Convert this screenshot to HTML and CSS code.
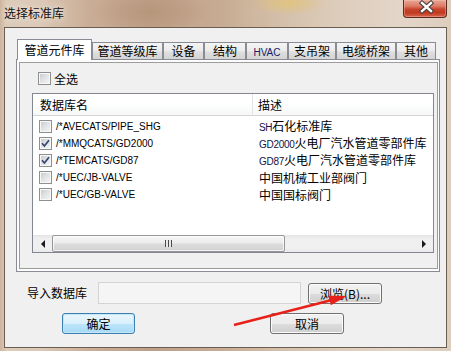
FILE: index.html
```html
<!DOCTYPE html>
<html>
<head>
<meta charset="utf-8">
<link rel="stylesheet" href="styles.css">
</head>
<body>
<div class="window">
  <div class="titlebar">
    <span class="title">选择标准库</span>
    <div class="close">
      <svg width="44" height="17" viewBox="0 0 44 17">
        <path d="M19 3 L28 11 M28 3 L19 11" stroke="#3d3b39" stroke-width="4.4" stroke-linecap="square" fill="none"/>
        <path d="M19 3 L28 11 M28 3 L19 11" stroke="#ffffff" stroke-width="2.4" stroke-linecap="square" fill="none"/>
      </svg>
    </div>
  </div>
  <div class="client">
    <div class="tabctl">
      <div class="tabs">
        <div class="tab active t1">管道元件库</div>
        <div class="tab t2">管道等级库</div>
        <div class="tab t3">设备</div>
        <div class="tab t4">结构</div>
        <div class="tab t5"><span class="en hv">HVAC</span></div>
        <div class="tab t6">支吊架</div>
        <div class="tab t7">电缆桥架</div>
        <div class="tab t8">其他</div>
      </div>
      <div class="panel">
        <div class="page">
          <div class="chk-row"><span class="cb"></span><span class="chk-label">全选</span></div>
          <div class="list">
            <div class="lhead">
              <div class="c1">数据库名</div>
              <div class="c2">描述</div>
            </div>
            <div class="rows">
              <div class="row">
                <div class="c1"><span class="cb"></span><span class="en name">/*AVECATS/PIPE_SHG</span></div>
                <div class="c2"><span class="en sm">SH</span>石化标准库</div>
              </div>
              <div class="row">
                <div class="c1"><span class="cb on"><svg width="11" height="11" viewBox="0 0 11 11"><path d="M2 5.2 L4.4 8 L9 2.2" stroke="#33466e" stroke-width="1.7" fill="none"/></svg></span><span class="en name">/*MMQCATS/GD2000</span></div>
                <div class="c2"><span class="en sm">GD2000</span>火电厂汽水管道零部件库</div>
              </div>
              <div class="row">
                <div class="c1"><span class="cb on"><svg width="11" height="11" viewBox="0 0 11 11"><path d="M2 5.2 L4.4 8 L9 2.2" stroke="#33466e" stroke-width="1.7" fill="none"/></svg></span><span class="en name">/*TEMCATS/GD87</span></div>
                <div class="c2"><span class="en sm">GD87</span>火电厂汽水管道零部件库</div>
              </div>
              <div class="row">
                <div class="c1"><span class="cb"></span><span class="en name">/*UEC/JB-VALVE</span></div>
                <div class="c2">中国机械工业部阀门</div>
              </div>
              <div class="row">
                <div class="c1"><span class="cb"></span><span class="en name">/*UEC/GB-VALVE</span></div>
                <div class="c2">中国国标阀门</div>
              </div>
            </div>
            <div class="hscroll">
              <div class="sb-btn"><span class="tri-l"></span></div>
              <div class="thumb"><span class="grip"></span></div>
              <div class="track"></div>
              <div class="sb-btn"><span class="tri-r"></span></div>
            </div>
          </div>
        </div>
      </div>
    </div>
    <div class="import-row">
      <span class="imp-label">导入数据库</span>
      <div class="input"></div>
      <div class="btn browse">浏览(B)...</div>
    </div>
    <div class="btn-row">
      <div class="btn default ok">确定</div>
      <div class="btn cancel">取消</div>
    </div>
  </div>
  <svg class="arrow" width="451" height="351" viewBox="0 0 451 351">
    <line x1="234" y1="325" x2="332" y2="300" stroke="#e8201a" stroke-width="2.4"/>
    <polygon points="347,296 330.8,305.3 328.4,295.7" fill="#e8201a"/>
  </svg>
</div>
</body>
</html>
```

FILE: styles.css
```css
html, body {
  margin: 0;
  padding: 0;
}

body {
  width: 451px;
  height: 351px;
  overflow: hidden;
  font-family: "Noto Sans CJK SC", sans-serif;
  font-size: 12px;
  color: #000;
}

.window {
  position: relative;
  width: 451px;
  height: 351px;
  box-sizing: border-box;
  padding: 0 4px 3px 4px;
  display: flex;
  flex-direction: column;
  background:
    radial-gradient(ellipse 38px 12px at 288px 3px, rgba(226, 196, 120, 0.85), rgba(226, 196, 120, 0)),
    radial-gradient(ellipse 60px 20px at 150px 12px, rgba(176, 140, 110, 0.5), rgba(176, 140, 110, 0)),
    linear-gradient(90deg, #cdb49f 0px, #dccbb9 6px, #dcc9b7 40px, #c9ad96 90px, #bea088 150px, #c7ab93 220px, #d2bca6 270px, #dccbb9 330px, #e3d6c9 400px, #ddcdbd 451px);
}

.titlebar {
  height: 27px;
  display: flex;
  justify-content: space-between;
  align-items: flex-start;
}

.title {
  line-height: 26px;
  font-size: 12px;
  color: #161210;
  text-shadow: 0 0 5px rgba(245, 238, 230, 0.9), 0 0 8px rgba(245, 238, 230, 0.7);
}

.close {
  width: 44px;
  height: 18px;
  box-sizing: border-box;
  border: 1px solid #5b2a20;
  border-top: none;
  border-radius: 0 0 4px 4px;
  background: linear-gradient(#e9a797 0%, #dc7d68 35%, #c8432b 55%, #c03a22 75%, #d9664c 100%);
  box-shadow: inset 0 0 0 1px rgba(255, 210, 200, 0.35);
}

.close svg {
  display: block;
  margin-left: -1px;
}

.client {
  flex: 1;
  background: #f0f0f0;
  border: 1px solid #6a5d52;
  display: flex;
  flex-direction: column;
}

/* tab control */
.tabctl {
  margin: 11px 0 0 11px;
  width: 424px;
}

.tabs {
  height: 20px;
  display: flex;
  align-items: flex-end;
  padding-left: 1px;
}

.tab {
  height: 17px;
  box-sizing: border-box;
  border: 1px solid #898c95;
  border-bottom: none;
  background: linear-gradient(#f4f4f4, #ebebeb 50%, #dfdfdf 55%, #d4d4d4);
  text-align: center;
  line-height: 16px;
  font-size: 12px;
  white-space: nowrap;
  overflow: hidden;
}

.tab.active {
  height: 21px;
  margin-bottom: -1px;
  position: relative;
  z-index: 2;
  background: #ffffff;
  line-height: 20px;
}

.t1 { width: 75px; }
.t2 { width: 71px; }
.t3 { width: 41px; }
.t4 { width: 42px; }
.t5 { width: 42px; }
.t6 { width: 48px; }
.t7 { width: 60px; }
.t8 { width: 40px; }

.en {
  font-family: "Liberation Sans", Arial, sans-serif;
  font-size: 10px;
}

.hv {
  color: #14206a;
}

.panel {
  height: 213px;
  box-sizing: border-box;
  border: 1px solid #898c95;
  background: #fcfcfc;
  padding: 2px 1px 2px 2px;
  display: flex;
}

.page {
  flex: 1;
  border: 1px solid #9c9c9c;
  background: #f0f0f0;
}

.chk-row {
  display: flex;
  align-items: center;
  height: 13px;
  margin: 9px 0 0 18px;
}

.chk-label {
  margin-left: 3px;
  line-height: 13px;
}

.cb {
  display: inline-flex;
  align-items: center;
  justify-content: center;
  width: 13px;
  height: 13px;
  box-sizing: border-box;
  border: 1px solid #8e8f8f;
  background: linear-gradient(135deg, #c4c7cc 0%, #dfe1e3 45%, #f7f7f7 100%);
  box-shadow: inset 0 0 0 1px #f8f8f8;
  flex: none;
}

.cb svg {
  display: block;
}

/* list view */
.list {
  margin: 8px 0 0 12px;
  width: 402px;
  height: 160px;
  box-sizing: border-box;
  border: 1px solid #828790;
  background: #fff;
  display: flex;
  flex-direction: column;
}

.lhead {
  height: 22px;
  box-sizing: border-box;
  border-bottom: 1px solid #d5d5d5;
  background: linear-gradient(#ffffff, #ffffff 45%, #f6f7f8);
  display: flex;
  line-height: 21px;
}

.lhead .c1 {
  width: 220px;
  box-sizing: border-box;
  padding-left: 7px;
  border-right: 1px solid #e3e4e6;
}

.lhead .c2 {
  padding-left: 5px;
}

.rows {
  flex: 1;
  padding-top: 2px;
}

.row {
  height: 17px;
  display: flex;
  align-items: center;
  line-height: 17px;
}

.row .c1 {
  width: 220px;
  box-sizing: border-box;
  padding-left: 6px;
  display: flex;
  align-items: center;
}

.row .c1 .name {
  margin-left: 4px;
}

.row .c2 {
  padding-left: 6px;
  white-space: nowrap;
}

.sm {
  font-size: 10px;
  letter-spacing: -0.3px;
  color: #10124a;
}

/* horizontal scrollbar */
.hscroll {
  height: 17px;
  display: flex;
  background: linear-gradient(#e4e4e4, #efefef 20%, #f0f0f0 80%, #e9e9e9);
}

.sb-btn {
  width: 19px;
  display: flex;
  align-items: center;
  justify-content: center;
}

.tri-l {
  width: 0;
  height: 0;
  border-top: 4px solid transparent;
  border-bottom: 4px solid transparent;
  border-right: 4px solid #1a1a1a;
}

.tri-r {
  width: 0;
  height: 0;
  border-top: 4px solid transparent;
  border-bottom: 4px solid transparent;
  border-left: 4px solid #1a1a1a;
}

.thumb {
  width: 233px;
  box-sizing: border-box;
  border: 1px solid #979797;
  border-radius: 2px;
  background: linear-gradient(#f6f6f6, #ececec 45%, #dcdcdc 55%, #d2d2d2);
  box-shadow: inset 0 0 0 1px rgba(255, 255, 255, 0.7);
  display: flex;
  align-items: center;
  justify-content: center;
}

.grip {
  width: 7px;
  height: 7px;
  background: repeating-linear-gradient(90deg, #4a4a4a 0px, #4a4a4a 1px, #e8e8e8 1px, #e8e8e8 3px);
}

.track {
  flex: 1;
}

/* bottom area */
.import-row {
  margin: 10px 0 0 22px;
  height: 22px;
  display: flex;
  align-items: center;
}

.imp-label {
  width: 71px;
  line-height: 22px;
}

.input {
  width: 203px;
  height: 22px;
  box-sizing: border-box;
  border: 1px solid #d4d4d4;
  background: #f5f5f5;
}

.btn {
  box-sizing: border-box;
  height: 21px;
  border: 1px solid #707070;
  border-radius: 3px;
  background: linear-gradient(#f2f2f2, #ebebeb 50%, #dddddd 51%, #cfcfcf);
  box-shadow: inset 0 0 0 1px #fbfbfb;
  text-align: center;
  line-height: 19px;
  font-size: 12px;
}

.browse {
  width: 74px;
  margin-left: 7px;
}

.btn-row {
  margin: 9px 0 0 57px;
  display: flex;
}

.ok {
  width: 73px;
}

.btn.default {
  border-color: #3c7fb1;
  background: linear-gradient(#eaf6fd, #d9f0fc 50%, #bee6fd 51%, #a7d9f5);
  box-shadow: inset 0 0 0 1px #c4e7f8;
}

.cancel {
  width: 74px;
  margin-left: 135px;
}

.arrow {
  position: absolute;
  left: 0;
  top: 0;
  pointer-events: none;
}
```
